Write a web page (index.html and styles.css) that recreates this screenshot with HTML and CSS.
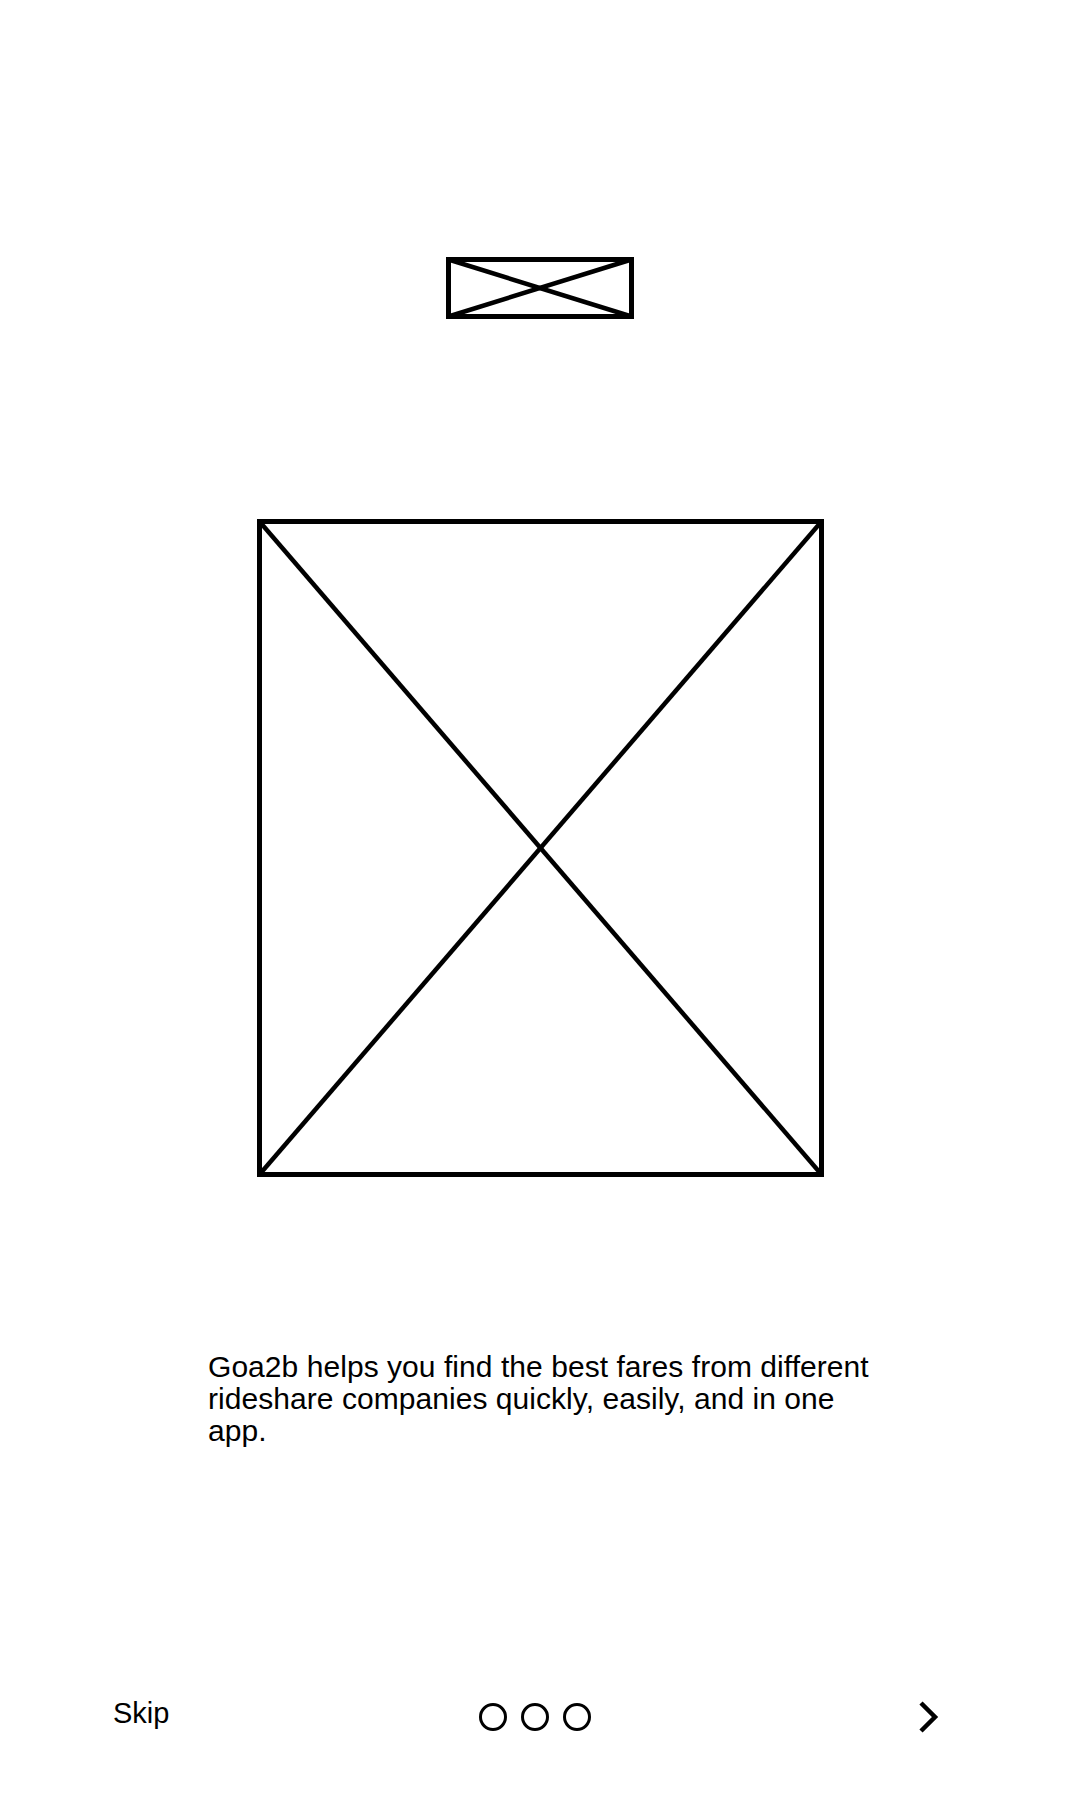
FILE: index.html
```html
<!DOCTYPE html>
<html lang="en">

  <head>
    <meta charset="UTF-8">
    <meta name="viewport" content="width=device-width, initial-scale=1.0">
    <title>Goa2b</title>
    <link rel="stylesheet" href="styles.css">
  </head>

  <body>
    <div id="screen">
      <svg class="logo" width="188" height="62" viewBox="0 0 188 62">
        <rect x="2.5" y="2.5" width="183" height="57" fill="none" stroke="#000" stroke-width="5"/>
        <line x1="2.5" y1="2.5" x2="185.5" y2="59.5" stroke="#000" stroke-width="4.5"/>
        <line x1="2.5" y1="59.5" x2="185.5" y2="2.5" stroke="#000" stroke-width="4.5"/>
      </svg>

      <svg class="hero" width="567" height="658" viewBox="0 0 567 658">
        <rect x="2.5" y="2.5" width="562" height="653" fill="none" stroke="#000" stroke-width="5"/>
        <line x1="2.5" y1="2.5" x2="564.5" y2="655.5" stroke="#000" stroke-width="4.5"/>
        <line x1="2.5" y1="655.5" x2="564.5" y2="2.5" stroke="#000" stroke-width="4.5"/>
      </svg>

      <p class="intro">Goa2b helps you find the best fares from different rideshare companies quickly, easily, and in one app.</p>

      <div class="footer">
        <span class="skip">Skip</span>
        <div class="dots">
          <span class="dot"></span>
          <span class="dot"></span>
          <span class="dot"></span>
        </div>
        <svg class="next" width="20" height="32" viewBox="0 0 20 32">
          <polyline points="2,2 16,16 2,30" fill="none" stroke="#000" stroke-width="4.5"/>
        </svg>
      </div>
    </div>
  </body>

</html>
```

FILE: styles.css
```css
body {
  margin: 0;
  background: white;
  font-family: "Liberation Sans", Arial, Helvetica, sans-serif;
  color: black;
}

#screen {
  width: 1080px;
  height: 1800px;
  display: flex;
  flex-direction: column;
  align-items: center;
}

.logo {
  display: block;
  margin-top: 257px;
}

.hero {
  display: block;
  margin-top: 200px;
}

.intro {
  width: 664px;
  margin: 174px 0 0 0;
  font-size: 30px;
  line-height: 32px;
  letter-spacing: 0.05px;
  text-align: start;
}

.footer {
  margin-top: auto;
  margin-bottom: 67px;
  width: 1080px;
  display: flex;
  align-items: center;
  justify-content: space-between;
  box-sizing: border-box;
  padding-left: 113px;
  padding-right: 141px;
}

.skip {
  font-size: 29px;
  width: 120px;
  position: relative;
  top: -3px;
}

.dots {
  display: flex;
  gap: 14px;
  margin-left: 246px;
}

.dot {
  width: 28px;
  height: 28px;
  box-sizing: border-box;
  border: 3.5px solid black;
  border-radius: 50%;
}

.next {
  display: block;
  margin-left: auto;
}
```
